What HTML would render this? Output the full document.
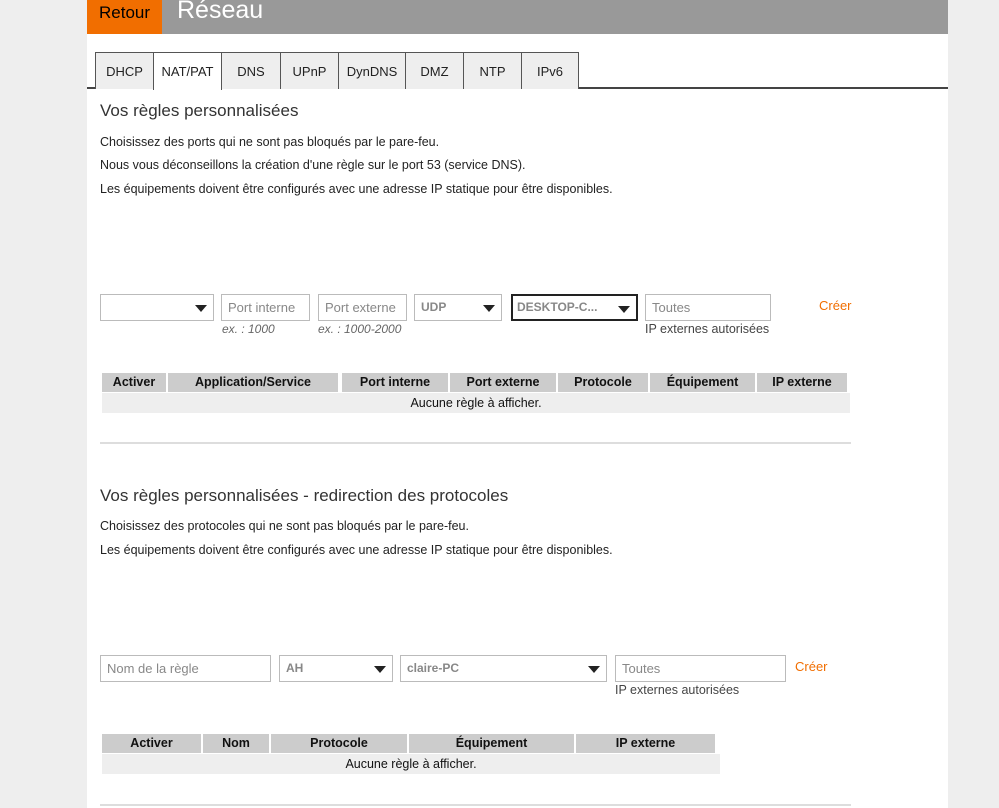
<!DOCTYPE html>
<html><head><meta charset="utf-8"><style>
*{box-sizing:border-box;margin:0;padding:0}
body{width:999px;height:808px;background:#eee;font-family:"Liberation Sans",Arial,sans-serif;color:#333;position:relative;overflow:hidden}
.page{position:absolute;left:87px;top:0;width:861px;height:808px;background:#fff}
.a{position:absolute}
.hdr{left:87px;top:0;width:861px;height:34px;background:#999}
.ret{left:87px;top:0;width:75px;height:34px;background:#f16e00;color:#000;font-size:17px;line-height:26px;text-align:center}
.tit{left:177px;top:-4px;color:#fff;font-size:25px}
.tab{top:52px;height:37px;border:1px solid #555;border-bottom:none;background:#eee;font-size:13px;color:#222;text-align:center;line-height:38px}
.tab.on{background:#fff;height:38px}
.h2{font-size:17px;color:#333}
.p{font-size:12.5px;color:#222}
.in{height:27px;border:1px solid #bbb;font-size:13px;color:#888;padding-left:6px;line-height:25px;background:#fff}
.sel{color:#888;font-weight:bold;font-size:12px}
.arr{position:absolute;right:6px;top:10px;width:0;height:0;border-left:6px solid transparent;border-right:6px solid transparent;border-top:7px solid #222}
.hint{font-size:12px;color:#666;font-style:italic}
.cr{color:#f16e00;font-size:13px}
.th{top:0;height:19px;background:#ccc;font-weight:bold;font-size:12.5px;color:#111;text-align:center;line-height:19px}
.empty{background:#eee;font-size:12.5px;text-align:center;line-height:20px;color:#111}
.hr{height:2px;background:#ddd}
</style></head><body>
<div class="page"></div>
<div class="a hdr"></div>
<div class="a ret">Retour</div>
<div class="a tit">Réseau</div>
<div class="a" style="left:87px;top:87px;width:861px;height:2px;background:#444"></div>
<div class="a tab" style="left:95px;width:59px">DHCP</div>
<div class="a tab on" style="left:153px;width:69px">NAT/PAT</div>
<div class="a tab" style="left:221px;width:60px">DNS</div>
<div class="a tab" style="left:280px;width:59px">UPnP</div>
<div class="a tab" style="left:338px;width:68px">DynDNS</div>
<div class="a tab" style="left:405px;width:59px">DMZ</div>
<div class="a tab" style="left:463px;width:59px">NTP</div>
<div class="a tab" style="left:521px;width:58px">IPv6</div>

<div class="a h2" style="left:100px;top:101px">Vos règles personnalisées</div>
<div class="a p" style="left:100px;top:135px">Choisissez des ports qui ne sont pas bloqués par le pare-feu.</div>
<div class="a p" style="left:100px;top:158px">Nous vous déconseillons la création d'une règle sur le port 53 (service DNS).</div>
<div class="a p" style="left:100px;top:182px">Les équipements doivent être configurés avec une adresse IP statique pour être disponibles.</div>

<div class="a in" style="left:100px;top:294px;width:114px"><span class="arr"></span></div>
<div class="a in" style="left:221px;top:294px;width:89px">Port interne</div>
<div class="a in" style="left:318px;top:294px;width:89px">Port externe</div>
<div class="a in sel" style="left:414px;top:294px;width:88px">UDP<span class="arr"></span></div>
<div class="a in sel" style="left:511px;top:294px;width:127px;border:2px solid #222;line-height:23px;padding-left:4px">DESKTOP-C...<span class="arr"></span></div>
<div class="a in" style="left:645px;top:294px;width:126px">Toutes</div>
<div class="a cr" style="left:819px;top:298px">Créer</div>
<div class="a hint" style="left:222px;top:322px">ex. : 1000</div>
<div class="a hint" style="left:318px;top:322px">ex. : 1000-2000</div>
<div class="a p" style="left:645px;top:322px;color:#444">IP externes autorisées</div>

<div class="a" style="left:102px;top:373px;width:748px;height:20px">
<div class="a th" style="left:0;width:64px">Activer</div>
<div class="a th" style="left:66px;width:170px">Application/Service</div>
<div class="a th" style="left:240px;width:106px">Port interne</div>
<div class="a th" style="left:348px;width:106px">Port externe</div>
<div class="a th" style="left:456px;width:90px">Protocole</div>
<div class="a th" style="left:548px;width:105px">Équipement</div>
<div class="a th" style="left:655px;width:90px">IP externe</div>
</div>
<div class="a empty" style="left:102px;top:393px;width:748px;height:20px">Aucune règle à afficher.</div>
<div class="a hr" style="left:100px;top:442px;width:751px"></div>

<div class="a h2" style="left:100px;top:486px">Vos règles personnalisées - redirection des protocoles</div>
<div class="a p" style="left:100px;top:519px">Choisissez des protocoles qui ne sont pas bloqués par le pare-feu.</div>
<div class="a p" style="left:100px;top:543px">Les équipements doivent être configurés avec une adresse IP statique pour être disponibles.</div>

<div class="a in" style="left:100px;top:655px;width:171px">Nom de la règle</div>
<div class="a in sel" style="left:279px;top:655px;width:114px">AH<span class="arr"></span></div>
<div class="a in sel" style="left:400px;top:655px;width:207px">claire-PC<span class="arr"></span></div>
<div class="a in" style="left:615px;top:655px;width:171px">Toutes</div>
<div class="a cr" style="left:795px;top:659px">Créer</div>
<div class="a p" style="left:615px;top:683px;color:#444">IP externes autorisées</div>

<div class="a" style="left:102px;top:734px;width:618px;height:20px">
<div class="a th" style="left:0;width:99px">Activer</div>
<div class="a th" style="left:101px;width:66px">Nom</div>
<div class="a th" style="left:169px;width:136px">Protocole</div>
<div class="a th" style="left:307px;width:165px">Équipement</div>
<div class="a th" style="left:474px;width:139px">IP externe</div>
</div>
<div class="a empty" style="left:102px;top:754px;width:618px;height:20px">Aucune règle à afficher.</div>
<div class="a hr" style="left:100px;top:804px;width:751px"></div>
</body></html>
